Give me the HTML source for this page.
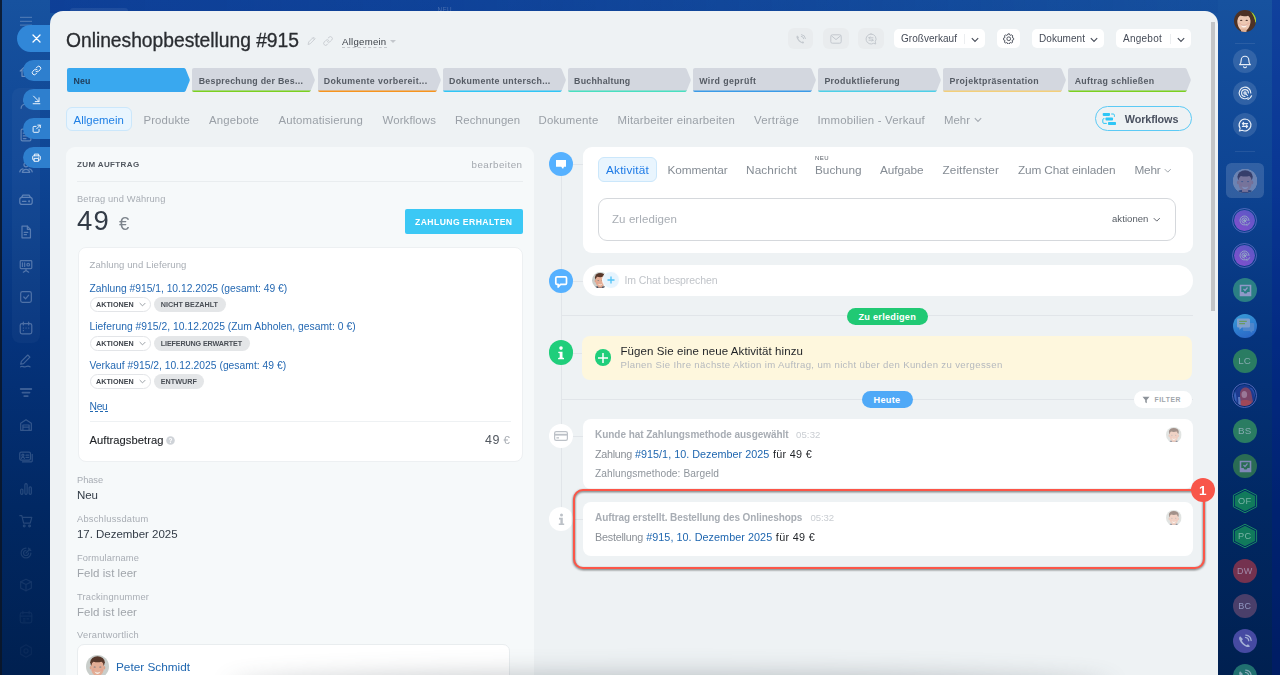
<!DOCTYPE html>
<html lang="de">
<head>
<meta charset="utf-8">
<title>Onlineshopbestellung #915</title>
<style>
*{box-sizing:border-box;margin:0;padding:0}
html,body{width:1280px;height:675px;overflow:hidden}
body{font-family:"Liberation Sans",sans-serif;position:relative;background:linear-gradient(180deg,#17529f 0%,#0e4594 25%,#05337c 50%,#012863 75%,#002050 100%);color:#333}
.abs{position:absolute}
.t{position:absolute;white-space:nowrap;line-height:1}
#edgeL{left:0;top:0;width:2px;height:675px;background:#0a1526;opacity:.85}
#stripR{left:1272px;top:0;width:8px;height:675px;background:rgba(0,20,150,.28)}
#panel{left:50px;top:11px;width:1168px;height:664px;background:#eef2f4;border-radius:13px 13px 0 0;overflow:hidden}
#pw{position:absolute;left:-50px;top:-11px;width:1280px;height:675px}
#scroll{left:1211px;top:22px;width:4px;height:289px;background:#c3c5c7}
.av-peter,.av-peter2{background:radial-gradient(circle at 50% 42%,#e8c3a6 0 32%,transparent 34%),radial-gradient(circle at 50% 22%,#5a3a28 0 38%,transparent 40%),radial-gradient(circle at 50% 105%,#4a5568 0 42%,transparent 44%),#cfd2d6}
.av-sm{background:radial-gradient(circle at 50% 45%,#e6c4aa 0 30%,transparent 33%),radial-gradient(circle at 50% 25%,#8a6a55 0 36%,transparent 39%),radial-gradient(circle at 50% 105%,#b9b3ae 0 40%,transparent 43%),#d8d6d3}
.av-woman{background:radial-gradient(circle at 52% 50%,#e9b99a 0 30%,transparent 33%),radial-gradient(circle at 45% 40%,#4a2a1c 0 52%,transparent 55%),#7a9a3a}
.av-rman{background:radial-gradient(circle at 50% 52%,#8a86a0 0 30%,transparent 33%),radial-gradient(circle at 50% 30%,#4a4660 0 40%,transparent 43%),#5a6a90}
.av-neon{background:radial-gradient(circle at 45% 45%,#7a4a7a 0 25%,transparent 30%),radial-gradient(circle at 50% 80%,#8a3a4a 0 30%,transparent 35%),#2a3a8a}
#root{position:absolute;left:0;top:0;width:1280px;height:675px;overflow:hidden;transform:translateZ(0)}

</style>
</head>
<body>
<div id="root">
<div id="stripR" class="abs"></div>
<div class="abs" style="left:50px;top:0;width:1168px;height:13px;background:linear-gradient(90deg,rgba(0,35,140,.38) 0%,rgba(0,35,140,.32) 35%,rgba(0,35,140,.05) 100%)"></div>
<div class="abs" style="left:70px;top:8px;width:58px;height:6px;background:rgba(255,255,255,.07);border-radius:3px;"></div>
<div class="t" style="left:437.5px;top:7.0px;font-size:6.3px;letter-spacing:0.40px;color:rgba(255,255,255,.22);">NEU</div>
<div class="abs" style="left:11.5px;top:88px;width:28.5px;height:255px;background:rgba(255,255,255,.03);border-radius:8px;"></div>
<svg class="abs" style="left:20px;top:16px;" width="12" height="10" viewBox="0 0 12 10" opacity=".27"><path d="M0 1.300h12M0 5.300h12M0 9.100h12" stroke="#fff" stroke-width="1"/></svg>
<svg class="abs" style="left:18px;top:63px;" width="16" height="16" viewBox="0 0 18 18" fill="none" stroke="#dfe8f5" stroke-width="1.35" stroke-linecap="round" stroke-linejoin="round" opacity="0.42"><path d="M2.500 9L9 3l6.500 6M4.500 8v7h9V8"/></svg>
<svg class="abs" style="left:18px;top:95px;" width="16" height="16" viewBox="0 0 18 18" fill="none" stroke="#dfe8f5" stroke-width="1.35" stroke-linecap="round" stroke-linejoin="round" opacity="0.36"><circle cx="9" cy="6" r="2.600"/><path d="M3.500 15c0-3 2.400-4.600 5.500-4.600s5.500 1.600 5.500 4.600"/></svg>
<svg class="abs" style="left:18px;top:127px;" width="16" height="16" viewBox="0 0 18 18" fill="none" stroke="#dfe8f5" stroke-width="1.35" stroke-linecap="round" stroke-linejoin="round" opacity="0.36"><rect x="3.500" y="2.500" width="11" height="13" rx="1.500"/><path d="M6 7h6M6 10h6M6 13h3"/></svg>
<svg class="abs" style="left:18px;top:158.5px;" width="16" height="16" viewBox="0 0 18 18" fill="none" stroke="#dfe8f5" stroke-width="1.35" stroke-linecap="round" stroke-linejoin="round" opacity="0.36"><circle cx="9" cy="6.500" r="2.300"/><path d="M2 14.500c.3-2 1.800-3 3.500-3.300M16 14.500c-.3-2-1.800-3-3.500-3.300M4.800 15c.4-2.200 2-3.400 4.200-3.400s3.800 1.200 4.200 3.400z"/></svg>
<svg class="abs" style="left:18px;top:191.5px;" width="16" height="16" viewBox="0 0 18 18" fill="none" stroke="#dfe8f5" stroke-width="1.35" stroke-linecap="round" stroke-linejoin="round" opacity="0.36"><rect x="2" y="6" width="14" height="8" rx="2.500"/><path d="M4 6l1.500-2.500h7L14 6M5 10.500h4"/><circle cx="12.500" cy="10.500" r=".5"/></svg>
<svg class="abs" style="left:18px;top:224.3px;" width="16" height="16" viewBox="0 0 18 18" fill="none" stroke="#dfe8f5" stroke-width="1.35" stroke-linecap="round" stroke-linejoin="round" opacity="0.34"><path d="M4.500 2.500h6l3.500 3.500v9.500h-9.500z"/><path d="M10.500 2.500V6H14M7 9.500h4M7 12h2.500"/></svg>
<svg class="abs" style="left:18px;top:257.5px;" width="16" height="16" viewBox="0 0 18 18" fill="none" stroke="#dfe8f5" stroke-width="1.35" stroke-linecap="round" stroke-linejoin="round" opacity="0.32"><rect x="2.500" y="3" width="13" height="9" rx="1"/><path d="M9 12v2M6 16l3-2 3 2M5 5.500v4M7.500 5.500v4"/><circle cx="11.500" cy="7.500" r="1.500"/></svg>
<svg class="abs" style="left:18px;top:289px;" width="16" height="16" viewBox="0 0 18 18" fill="none" stroke="#dfe8f5" stroke-width="1.35" stroke-linecap="round" stroke-linejoin="round" opacity="0.31"><rect x="3" y="3" width="12" height="12" rx="2"/><path d="M6.500 9l2 2 3.500-4"/></svg>
<svg class="abs" style="left:18px;top:320.2px;" width="16" height="16" viewBox="0 0 18 18" fill="none" stroke="#dfe8f5" stroke-width="1.35" stroke-linecap="round" stroke-linejoin="round" opacity="0.3"><rect x="2.500" y="4" width="13" height="11.500" rx="2"/><path d="M6 2.500v3M12 2.500v3M6 9h.1M9 9h.1M12 9h.1M6 12h.1"/></svg>
<svg class="abs" style="left:18px;top:353px;" width="16" height="16" viewBox="0 0 18 18" fill="none" stroke="#dfe8f5" stroke-width="1.35" stroke-linecap="round" stroke-linejoin="round" opacity="0.28"><path d="M3 12.500l.8-3L11 2.300l2.400 2.400L6.200 12z"/><path d="M3 15.500c2-1.500 3.500 1 5.500 0s3-1.500 5 0"/></svg>
<svg class="abs" style="left:18px;top:385px;" width="16" height="16" viewBox="0 0 18 18" fill="none" stroke="#dfe8f5" stroke-width="1.35" stroke-linecap="round" stroke-linejoin="round" opacity="0.25"><path d="M3 4.500h12M5 8.500h8M7 12.500h4" stroke-width="2"/></svg>
<svg class="abs" style="left:18px;top:416.6px;" width="16" height="16" viewBox="0 0 18 18" fill="none" stroke="#dfe8f5" stroke-width="1.35" stroke-linecap="round" stroke-linejoin="round" opacity="0.22"><path d="M3 15V7l6-4 6 4v8z"/><path d="M5.500 15V9h7v6M5.500 11.500h7"/></svg>
<svg class="abs" style="left:18px;top:449px;" width="16" height="16" viewBox="0 0 18 18" fill="none" stroke="#dfe8f5" stroke-width="1.35" stroke-linecap="round" stroke-linejoin="round" opacity="0.2"><rect x="2" y="3.500" width="12" height="9" rx="1.500"/><path d="M16 6v7.500a1 1 0 0 1-1 1H5"/><circle cx="5.500" cy="7" r="1.200"/><path d="M3.800 10.500c.3-1 1-1.400 1.700-1.400s1.400.4 1.700 1.400M9 7h3M9 9.500h3"/></svg>
<svg class="abs" style="left:18px;top:480.5px;" width="16" height="16" viewBox="0 0 18 18" fill="none" stroke="#dfe8f5" stroke-width="1.35" stroke-linecap="round" stroke-linejoin="round" opacity="0.17"><rect x="3" y="9" width="2.500" height="6" rx="1.200"/><rect x="7.750" y="3" width="2.500" height="12" rx="1.200"/><rect x="12.500" y="6.500" width="2.500" height="8.500" rx="1.200"/></svg>
<svg class="abs" style="left:18px;top:512.6px;" width="16" height="16" viewBox="0 0 18 18" fill="none" stroke="#dfe8f5" stroke-width="1.35" stroke-linecap="round" stroke-linejoin="round" opacity="0.17"><path d="M2 3h2.300l2 8.500h7.500L15.500 5H5"/><circle cx="7" cy="14.500" r="1"/><circle cx="13" cy="14.500" r="1"/></svg>
<svg class="abs" style="left:18px;top:544.5px;" width="16" height="16" viewBox="0 0 18 18" fill="none" stroke="#dfe8f5" stroke-width="1.35" stroke-linecap="round" stroke-linejoin="round" opacity="0.12"><path d="M14.500 9a5.500 5.500 0 1 1-5.500-5.500"/><path d="M11.800 9A2.800 2.800 0 1 1 9 6.200M9 9l4.500-4.500M12 3.500l.5 2 2 .5"/></svg>
<svg class="abs" style="left:18px;top:577px;" width="16" height="16" viewBox="0 0 18 18" fill="none" stroke="#dfe8f5" stroke-width="1.35" stroke-linecap="round" stroke-linejoin="round" opacity="0.085"><path d="M9 2.500l6 3v7l-6 3-6-3v-7z"/><path d="M3 5.500l6 3 6-3M9 8.500v7"/></svg>
<svg class="abs" style="left:18px;top:608.7px;" width="16" height="16" viewBox="0 0 18 18" fill="none" stroke="#dfe8f5" stroke-width="1.35" stroke-linecap="round" stroke-linejoin="round" opacity="0.055"><rect x="2.500" y="4" width="13" height="11.500" rx="2"/><path d="M5.500 2.500v3M12.500 2.500v3M2.500 8h13M6 11h2M10 11h2M6 13.500h2"/></svg>
<svg class="abs" style="left:18px;top:643px;" width="16" height="16" viewBox="0 0 18 18" fill="none" stroke="#dfe8f5" stroke-width="1.35" stroke-linecap="round" stroke-linejoin="round" opacity="0.045"><path d="M9 2l6 3.500v7L9 16l-6-3.500v-7z"/><circle cx="9" cy="9" r="2.300"/></svg>
<svg class="abs" style="left:1233.8px;top:10.2px;" width="22" height="22" viewBox="0 0 22 22" fill="none"><defs><clipPath id="avw"><circle cx="11" cy="11" r="11"/></clipPath></defs><g clip-path="url(#avw)"><rect width="22" height="22" fill="#4d3226"/><path d="M15.500 0h6.500v14c-1-5-2.800-10-6.500-14z" fill="#86b52c"/><path d="M17.800 2.800c1.800 2.400 3.200 5.700 3.500 9.500l.7-.5V2z" fill="#a9d13e"/><path d="M3.300 11c0-5 2.700-7.800 6.500-7.800s6.700 2.800 6.700 7.800c0 5.200-3 10-6.700 10S3.300 16.200 3.300 11z" fill="#ecc8b3"/><rect x="7" y="18.500" width="5.500" height="4" fill="#dfb39a"/><path d="M2.600 12.500C1.300 6 4.500 1.800 10 1.800c5 0 8 3.200 7.400 9.700-.8-2.800-1.800-4.600-3.300-5.800C11.600 6.500 8.400 6.300 6.200 5.600 4.200 7 3.200 9.500 2.600 12.500z" fill="#4d3226"/><ellipse cx="7.200" cy="10.400" rx="1.200" ry=".65" fill="#5a4138"/><ellipse cx="12.700" cy="10.400" rx="1.200" ry=".65" fill="#5a4138"/><path d="M7 15c1.900 1 4 1 5.900 0-.5 1.800-1.700 2.500-2.950 2.500S7.500 16.800 7 15z" fill="#fbf3ee"/><path d="M6.800 14.800c2 .6 4.300.6 6.300 0" fill="none" stroke="#c98b80" stroke-width=".5"/><ellipse cx="5.500" cy="13.500" rx="1.500" ry="1.100" fill="#e7a898" opacity=".5"/><ellipse cx="14.300" cy="13.500" rx="1.500" ry="1.100" fill="#e7a898" opacity=".5"/></g></svg>
<div class="abs" style="left:1235px;top:43px;width:20px;height:1px;background:rgba(255,255,255,.09);border-radius:0px;"></div>
<div class="abs" style="left:1232.7px;top:49px;width:24px;height:24px;border-radius:50%;background:rgba(255,255,255,.13);"></div>
<div class="abs" style="left:1232.7px;top:81px;width:24px;height:24px;border-radius:50%;background:rgba(255,255,255,.13);"></div>
<div class="abs" style="left:1232.7px;top:113px;width:24px;height:24px;border-radius:50%;background:rgba(255,255,255,.13);"></div>
<svg class="abs" style="left:1237px;top:53px;" width="16" height="16" viewBox="0 0 16 16" fill="none" stroke="#e9eff8" stroke-width="1.150" stroke-linecap="round" stroke-linejoin="round"><path d="M2.600 11.600c1.300-1.100 1.600-2.400 1.600-4.600a3.800 3.800 0 0 1 7.600 0c0 2.200.3 3.500 1.600 4.600zM6.600 13.800a1.500 1.500 0 0 0 2.800 0"/></svg>
<svg class="abs" style="left:1237px;top:85px;" width="16" height="16" viewBox="0 0 16 16" fill="none" stroke="#e9eff8" stroke-width="1.150" stroke-linecap="round" stroke-linejoin="round"><path d="M13.800 8a5.800 5.800 0 1 0-2.600 4.800"/><path d="M11.400 8A3.400 3.400 0 1 0 8 11.400"/><path d="M14.600 10.800a7 7 0 0 1-3.600 3.700"/><circle cx="8" cy="8" r="1.100"/><path d="M8.800 8.800l1.600 1.600"/></svg>
<svg class="abs" style="left:1237px;top:117px;" width="16" height="16" viewBox="0 0 16 16" fill="none" stroke="#e9eff8" stroke-width="1.150" stroke-linecap="round" stroke-linejoin="round"><path d="M8 2a6 6 0 1 1-2.900 11.300l-2.700.7.700-2.700A6 6 0 0 1 8 2z"/><path d="M5.400 6.600h5.200M5.400 6.600l1.200-1.200M5.400 6.600l1.200 1.200M10.600 9.400H5.400M10.600 9.400l-1.200-1.200M10.600 9.400l-1.200 1.200"/></svg>
<div class="abs" style="left:1235px;top:151px;width:20px;height:1px;background:rgba(255,255,255,.09);border-radius:0px;"></div>
<div class="abs" style="left:1226px;top:163px;width:38px;height:35px;background:rgba(255,255,255,.15);border-radius:5.5px;"></div>
<svg class="abs" style="left:1232.8px;top:168.7px;" width="24.2" height="24.2" viewBox="0 0 23 23" fill="none"><defs><clipPath id="avp1"><circle cx="11.500" cy="11.500" r="11.500"/></clipPath></defs><g clip-path="url(#avp1)" opacity="1"><rect width="23" height="23" fill="#c9cecb"/><path d="M2.500 24c.5-2.500 2.500-3.600 5.500-4h7c3 .4 5 1.500 5.500 4z" fill="#3b4356"/><rect x="8.600" y="17" width="5.800" height="5" fill="#d79f88"/><ellipse cx="11.500" cy="7.300" rx="7.300" ry="6" fill="#56372a"/><ellipse cx="4.800" cy="12.800" rx="1.100" ry="1.800" fill="#dba18a"/><ellipse cx="18.200" cy="12.800" rx="1.100" ry="1.800" fill="#dba18a"/><path d="M5.300 9.500c0-3 2.500-4.600 6.200-4.600s6.200 1.600 6.200 4.600v4.500c0 4-2.800 7-6.200 7s-6.200-3-6.200-7z" fill="#e3ad95"/><path d="M5 10.500c-.3-3.500 1.500-6.300 6.500-6.300s6.800 2.800 6.500 6.300c-.8-2-1.500-3.300-2.600-3.800-2.400.7-5.400.7-7.800 0-1.100.5-1.800 1.800-2.600 3.800z" fill="#56372a"/><ellipse cx="8.700" cy="12" rx="1.100" ry=".6" fill="#6c7480"/><ellipse cx="14.300" cy="12" rx="1.100" ry=".6" fill="#6c7480"/><path d="M8.600 16.600c1.800 1.300 4 1.300 5.800 0-.5 1.700-1.700 2.400-2.900 2.400s-2.400-.7-2.900-2.400z" fill="#f4ece6"/><ellipse cx="7.300" cy="15" rx="1.600" ry="1.200" fill="#e79f8d" opacity=".6"/><ellipse cx="15.700" cy="15" rx="1.600" ry="1.200" fill="#e79f8d" opacity=".6"/><rect width="23" height="23" fill="rgba(30,70,160,.55)"/></g></svg>
<div class="abs" style="left:1232.2px;top:207.8px;width:25px;height:25px;border-radius:50%;background:none;border:1px solid rgba(135,135,225,.55);"></div>
<div class="abs" style="left:1234.3px;top:209.9px;width:20.8px;height:20.8px;border-radius:50%;background:linear-gradient(35deg,#7f50cc 10%,#5c58c6 90%);"></div>
<svg class="abs" style="left:1238.2px;top:213.8px;" width="13" height="13" viewBox="0 0 13 13" fill="none" stroke="#93a6c6" stroke-width="1" stroke-linecap="round"><path d="M11 6.500a4.500 4.500 0 1 0-2 3.750"/><path d="M9.100 6.500A2.600 2.600 0 1 0 6.500 9.100"/><path d="M11.600 8.700a5.400 5.400 0 0 1-2.700 2.800"/><circle cx="6.500" cy="6.500" r=".9" fill="#93a6c6"/><path d="M7 7l1.300 1.300"/></svg>
<div class="abs" style="left:1232.2px;top:242.7px;width:25px;height:25px;border-radius:50%;background:none;border:1px solid rgba(135,135,225,.55);"></div>
<div class="abs" style="left:1234.3px;top:244.8px;width:20.8px;height:20.8px;border-radius:50%;background:linear-gradient(35deg,#7f50cc 10%,#5c58c6 90%);"></div>
<svg class="abs" style="left:1238.2px;top:248.7px;" width="13" height="13" viewBox="0 0 13 13" fill="none" stroke="#93a6c6" stroke-width="1" stroke-linecap="round"><path d="M11 6.500a4.500 4.500 0 1 0-2 3.750"/><path d="M9.100 6.500A2.600 2.600 0 1 0 6.500 9.100"/><path d="M11.600 8.700a5.400 5.400 0 0 1-2.700 2.800"/><circle cx="6.500" cy="6.500" r=".9" fill="#93a6c6"/><path d="M7 7l1.300 1.300"/></svg>
<div class="abs" style="left:1232.7px;top:278px;width:24px;height:24px;border-radius:50%;background:#2b7f84;"></div>
<svg class="abs" style="left:1238.5px;top:283.5px;" width="13" height="13" viewBox="0 0 13 13" fill="none"><path d="M1.500 1.500h10v10h-10z" fill="none" stroke="#8f99c8" stroke-width="1.600"/><path d="M1.500 8h3l1 1.500h2l1-1.500h3v3.500h-10z" fill="#8f99c8"/><path d="M4.500 5l1.500 1.500 2.500-3" fill="none" stroke="#8f99c8" stroke-width="1.200"/></svg>
<div class="abs" style="left:1232.7px;top:313.6px;width:24px;height:24px;border-radius:50%;background:linear-gradient(160deg,#3a9ed6 0%,#2f7fd0 50%,#2a62c4 100%);"></div>
<svg class="abs" style="left:1235.7px;top:316.5px;" width="19" height="17" viewBox="0 0 19 17" fill="none"><path d="M8 6h9a1.200 1.200 0 0 1 1.200 1.200v5.600a1.200 1.200 0 0 1-1.200 1.200h-.8v2l-2.400-2H8a1.200 1.200 0 0 1-1.200-1.200V7.200A1.200 1.200 0 0 1 8 6z" fill="#4f86cc"/><path d="M2.200 1.500h10.600a1.200 1.200 0 0 1 1.200 1.200v6.600a1.200 1.200 0 0 1-1.200 1.200H6l-2.600 2.200v-2.200H2.200A1.200 1.200 0 0 1 1 9.300V2.700a1.200 1.200 0 0 1 1.200-1.200z" fill="#7f9fcc"/><path d="M3.200 4.300h7.600M3.200 6.700h5.800" stroke="#6a9a62" stroke-width="1.300"/></svg>
<div class="abs" style="left:1232.7px;top:348.7px;width:24px;height:24px;border-radius:50%;background:#2a7c62;"></div>
<div class="t" style="left:1224.700px;width:40px;text-align:center;top:356.1px;font-size:9.8px;color:#86aab0;letter-spacing:.2px">LC</div>
<div class="abs" style="left:1232.4px;top:383.2px;width:24.6px;height:24.6px;border-radius:50%;background:none;border:1px solid rgba(135,135,225,.6);"></div>
<svg class="abs" style="left:1234.2px;top:385px;" width="21" height="21" viewBox="0 0 21 21" fill="none"><defs><clipPath id="avn"><circle cx="10.500" cy="10.500" r="10.500"/></clipPath></defs><g clip-path="url(#avn)"><rect width="21" height="21" fill="#1c3a90"/><path d="M0 5c2 2 3 8 2.500 16H0z" fill="#3a62b8"/><path d="M15 3c3 1 5 5 6 10V3z" fill="#2a50a8"/><path d="M6 9c0-4 2.500-6.500 5.500-6.500S17 5 17.500 9c.5 4 1.500 8 3 12H5c1-4 1-8 1-12z" fill="#7a4468"/><ellipse cx="10.300" cy="9.500" rx="2.800" ry="3.600" fill="#9a7898"/><path d="M6.500 16c2-1.500 7-1.500 10 0l2 5h-13z" fill="#a04858"/><path d="M4 12c.5 3 .5 6 0 9h2.500c.3-3 0-6-.5-9z" fill="#5a78c0"/></g></svg>
<div class="abs" style="left:1232.7px;top:419px;width:24px;height:24px;border-radius:50%;background:#2a7c62;"></div>
<div class="t" style="left:1224.700px;width:40px;text-align:center;top:426.4px;font-size:9.8px;color:#86aab0;letter-spacing:.2px">BS</div>
<div class="abs" style="left:1232.7px;top:454px;width:24px;height:24px;border-radius:50%;background:#2a6c54;"></div>
<svg class="abs" style="left:1238.5px;top:459.5px;" width="13" height="13" viewBox="0 0 13 13" fill="none"><path d="M1.500 1.500h10v10h-10z" fill="none" stroke="#8088b8" stroke-width="1.600"/><path d="M1.500 8h3l1 1.500h2l1-1.500h3v3.500h-10z" fill="#8088b8"/><path d="M4.500 5l1.500 1.500 2.500-3" fill="none" stroke="#8088b8" stroke-width="1.200"/></svg>
<svg class="abs" style="left:1231.7px;top:488px;" width="26" height="26" viewBox="0 0 26 26" fill="none"><path d="M13 1.200L24.600 7.200V18.800L13 24.800 1.400 18.800V7.200z" fill="none" stroke="#1a8a64" stroke-width="1" stroke-linejoin="round"/><path d="M13 3.800L22.200 8.600V17.400L13 22.200 3.800 17.400V8.600z" fill="#117a5c" stroke="#117a5c" stroke-width="2" stroke-linejoin="round"/></svg>
<div class="t" style="left:1224.700px;width:40px;text-align:center;top:496.7px;font-size:9.2px;color:#7ab4a6;letter-spacing:.2px">OF</div>
<svg class="abs" style="left:1231.7px;top:523px;" width="26" height="26" viewBox="0 0 26 26" fill="none"><path d="M13 1.200L24.600 7.200V18.800L13 24.800 1.400 18.800V7.200z" fill="none" stroke="#1a8a64" stroke-width="1" stroke-linejoin="round"/><path d="M13 3.800L22.200 8.600V17.400L13 22.200 3.800 17.400V8.600z" fill="#117a5c" stroke="#117a5c" stroke-width="2" stroke-linejoin="round"/></svg>
<div class="t" style="left:1224.700px;width:40px;text-align:center;top:531.7px;font-size:9.2px;color:#7ab4a6;letter-spacing:.2px">PC</div>
<div class="abs" style="left:1232.7px;top:559px;width:24px;height:24px;border-radius:50%;background:#74324f;"></div>
<div class="t" style="left:1224.700px;width:40px;text-align:center;top:566.8px;font-size:9px;color:#a08aa8;letter-spacing:.2px">DW</div>
<div class="abs" style="left:1232.7px;top:594px;width:24px;height:24px;border-radius:50%;background:#4a3f6a;"></div>
<div class="t" style="left:1224.700px;width:40px;text-align:center;top:601.8px;font-size:9px;color:#8f96c0;letter-spacing:.2px">BC</div>
<div class="abs" style="left:1232.7px;top:629px;width:24px;height:24px;border-radius:50%;background:#464aa2;"></div>
<svg class="abs" style="left:1237.2px;top:633.5px;" width="15" height="15" viewBox="0 0 12 12" fill="none"><path d="M2.500 1.800c-.9.700-1 1.800-.5 3 1.100 2.500 2.900 4.300 5.400 5.400 1.200.5 2.300.4 3-.5L8.800 8.100l-1.400.8C6 8.200 4.600 6.800 3.900 5.400l.8-1.400z" fill="#a4b0d6"/><path d="M6.800 2.800a2.800 2.800 0 0 1 2.600 2.600M7 .9a4.800 4.800 0 0 1 4.300 4.300" fill="none" stroke="#a4b0d6" stroke-width="1" stroke-linecap="round"/></svg>
<div class="abs" style="left:1232.7px;top:664px;width:24px;height:24px;border-radius:50%;background:#207070;"></div>
<svg class="abs" style="left:1237.2px;top:668.5px;" width="15" height="15" viewBox="0 0 12 12" fill="none"><path d="M2.500 1.800c-.9.700-1 1.800-.5 3 1.100 2.500 2.900 4.300 5.400 5.400 1.200.5 2.300.4 3-.5L8.800 8.100l-1.400.8C6 8.200 4.600 6.800 3.900 5.400l.8-1.400z" fill="#86aab8"/><path d="M6.800 2.800a2.800 2.800 0 0 1 2.600 2.600M7 .9a4.800 4.800 0 0 1 4.300 4.300" fill="none" stroke="#86aab8" stroke-width="1" stroke-linecap="round"/></svg>
<div class="abs" style="left:17px;top:25px;width:35px;height:27px;background:#3187d8;border-radius:13.5px 0 0 13.5px;"></div>
<svg class="abs" style="left:31.5px;top:34px;" width="9" height="9" viewBox="0 0 9 9" fill="none"><path d="M1 1l7 7M8 1l-7 7" stroke="#fff" stroke-width="1.300" stroke-linecap="round"/></svg>
<div class="abs" style="left:23px;top:59.5px;width:29px;height:21px;background:#2e7fce;border-radius:10.5px 0 0 10.5px;"></div>
<svg class="abs" style="left:30.5px;top:64.5px;" width="11" height="11" viewBox="0 0 13 13" fill="none" stroke="#f2f7fd" stroke-width="1.150" stroke-linecap="round" stroke-linejoin="round"><path d="M5.600 7.400a2.400 2.400 0 0 0 3.400 0l1.800-1.800a2.400 2.400 0 0 0-3.400-3.400l-.9.900"/><path d="M7.400 5.600a2.400 2.400 0 0 0-3.400 0L2.200 7.400a2.400 2.400 0 0 0 3.400 3.400l.9-.9"/></svg>
<div class="abs" style="left:23px;top:88.5px;width:29px;height:21px;background:#2e7fce;border-radius:10.5px 0 0 10.5px;"></div>
<svg class="abs" style="left:30.5px;top:93.5px;" width="11" height="11" viewBox="0 0 13 13" fill="none" stroke="#f2f7fd" stroke-width="1.150" stroke-linecap="round" stroke-linejoin="round"><path d="M3 2.500l6.500 6.500M9.500 4.500V9H5M2.500 11.500h8"/></svg>
<div class="abs" style="left:23px;top:117.5px;width:29px;height:21px;background:#2e7fce;border-radius:10.5px 0 0 10.5px;"></div>
<svg class="abs" style="left:30.5px;top:122.5px;" width="11" height="11" viewBox="0 0 13 13" fill="none" stroke="#f2f7fd" stroke-width="1.150" stroke-linecap="round" stroke-linejoin="round"><path d="M9.500 7.500v2.500a1 1 0 0 1-1 1h-5a1 1 0 0 1-1-1V5a1 1 0 0 1 1-1H6M8 2.500h3v3M11 2.500L6.500 7"/></svg>
<div class="abs" style="left:23px;top:146.5px;width:29px;height:21px;background:#2e7fce;border-radius:10.5px 0 0 10.5px;"></div>
<svg class="abs" style="left:30.5px;top:151.5px;" width="11" height="11" viewBox="0 0 13 13" fill="none" stroke="#f2f7fd" stroke-width="1.150" stroke-linecap="round" stroke-linejoin="round"><path d="M4 4.500V2.500h5v2M4 9.500H3a1 1 0 0 1-1-1V5.500a1 1 0 0 1 1-1h7a1 1 0 0 1 1 1v3a1 1 0 0 1-1 1H9M4 7.500h5v3.500H4zM9 6.200h.1"/></svg>
<div id="panel" class="abs">
<div id="pw">
<div class="t" style="left:66.0px;top:31.0px;font-size:19.3px;letter-spacing:-0.03px;color:#2a2d31;-webkit-text-stroke:.3px #2a2d31;">Onlineshopbestellung #915</div>
<svg class="abs" style="left:307.2px;top:36.3px;" width="9.3" height="9.3" viewBox="0 0 12 12" fill="none" stroke="#c9cdd2" stroke-width="1.200" stroke-linecap="round" stroke-linejoin="round"><path d="M1.5 10.500l.7-2.800 6.200-6.200 2.100 2.100-6.200 6.200z"/><path d="M7.300 2.600l2.100 2.100"/></svg>
<svg class="abs" style="left:322.5px;top:36px;" width="10" height="10" viewBox="0 0 12 12" fill="none" stroke="#c9cdd2" stroke-width="1.200" stroke-linecap="round" stroke-linejoin="round"><path d="M5.200 6.800a2.300 2.300 0 0 0 3.300 0l2-2a2.300 2.300 0 0 0-3.300-3.300l-1 1"/><path d="M6.800 5.200a2.300 2.300 0 0 0-3.300 0l-2 2a2.300 2.300 0 0 0 3.300 3.300l1-1"/></svg>
<div class="t" style="left:342.0px;top:37.0px;font-size:9.6px;letter-spacing:0.26px;color:#3d4249;">Allgemein</div>
<div class="abs" style="left:342px;top:46.5px;width:45px;height:1px;background:none;border-radius:0px;border-bottom:1px dashed #c3c7cc;height:1px"></div>
<div class="abs" style="left:390.200px;top:40.200px;border:3px solid transparent;border-top:3.200px solid #c3c7cc;border-bottom:0"></div>
<div class="abs" style="left:788px;top:28.2px;width:25px;height:20.8px;background:#e9ecee;border-radius:6px;"></div><div class="abs" style="left:823px;top:28.2px;width:26px;height:20.8px;background:#e9ecee;border-radius:6px;"></div><div class="abs" style="left:858px;top:28.2px;width:26px;height:20.8px;background:#e9ecee;border-radius:6px;"></div>
<svg class="abs" style="left:795px;top:33.5px;" width="11" height="11" viewBox="0 0 11 11" fill="none" stroke="#c3c8ce" stroke-width="1" stroke-linecap="round"><path d="M2.2 1.500c-.8.600-.9 1.600-.4 2.700 1 2.200 2.600 3.900 4.800 4.900 1 .500 2 .400 2.600-.4L8 7.300l-1.300.7C5.400 7.400 4 6 3.300 4.600L4 3.300z" fill="#c3c8ce" stroke="none"/><path d="M6.300 2.300a2.600 2.600 0 0 1 2.400 2.400M6.500.6a4.400 4.400 0 0 1 4 4"/></svg>
<svg class="abs" style="left:830px;top:34px;" width="12" height="10" viewBox="0 0 12 10" fill="none" stroke="#c3c8ce" stroke-width="1" stroke-linejoin="round"><rect x=".8" y=".8" width="10.4" height="8.4" rx="1.5"/><path d="M1.200 1.600L6 5.600l4.800-4"/></svg>
<svg class="abs" style="left:864.5px;top:32.5px;" width="12" height="12" viewBox="0 0 12 12" fill="none" stroke="#c3c8ce" stroke-width="1" stroke-linecap="round" stroke-linejoin="round"><path d="M6 1a5 5 0 1 0 2.600 9.300l2.200.700-.6-2.200A5 5 0 0 0 6 1z"/><path d="M4 4.800h4M4 4.800l1-1M4 4.800l1 1M8 7.200H4M8 7.200l-1 1M8 7.200l-1-1"/></svg>
<div class="abs" style="left:894px;top:29.2px;width:91px;height:19px;background:#fff;border-radius:5px;"></div><div class="abs" style="left:997px;top:29.2px;width:23px;height:19px;background:#fff;border-radius:5px;"></div><div class="abs" style="left:1032px;top:29.2px;width:72px;height:19px;background:#fff;border-radius:5px;"></div><div class="abs" style="left:1116px;top:29.2px;width:75px;height:19px;background:#fff;border-radius:5px;"></div>
<div class="t" style="left:901.0px;top:34.0px;font-size:10px;letter-spacing:0.04px;color:#464c58;">Großverkauf</div>
<div class="abs" style="left:964px;top:34px;width:1px;height:10px;background:#eceef0;border-radius:0px;"></div>
<svg class="abs" style="left:971px;top:36.5px;" width="8" height="6" viewBox="0 0 8 6" fill="none" stroke="#464c58" stroke-width="1.1"><path d="M.8 1.2l3.200 3.200 3.200-3.200"/></svg>
<svg class="abs" style="left:1003px;top:32.9px;" width="11.5" height="11.5" viewBox="0 0 13 13" fill="none" stroke="#464c58" stroke-width="1.050"><circle cx="6.500" cy="6.500" r="2.100"/><path d="M5.600 1h1.800l.35 1.300 1 .42 1.170-.67 1.270 1.270-.67 1.170.42 1L12 5.840v1.800l-1.300.35-.42 1 .67 1.170-1.270 1.270-1.170-.67-1 .42L7.160 12.500h-1.800L5 11.200l-1-.42-1.170.67-1.270-1.270.67-1.170-.42-1L.5 7.660v-1.800l1.300-.35.42-1-.67-1.170 1.270-1.270 1.170.67 1-.42z" stroke-linejoin="round"/></svg>
<div class="t" style="left:1039.0px;top:34.0px;font-size:10px;letter-spacing:0.05px;color:#464c58;">Dokument</div>
<svg class="abs" style="left:1090px;top:36.5px;" width="8" height="6" viewBox="0 0 8 6" fill="none" stroke="#464c58" stroke-width="1.1"><path d="M.8 1.2l3.200 3.200 3.200-3.200"/></svg>
<div class="t" style="left:1123.0px;top:34.0px;font-size:10px;letter-spacing:0.25px;color:#464c58;">Angebot</div>
<div class="abs" style="left:1170px;top:34px;width:1px;height:10px;background:#eceef0;border-radius:0px;"></div>
<svg class="abs" style="left:1177px;top:36.5px;" width="8" height="6" viewBox="0 0 8 6" fill="none" stroke="#464c58" stroke-width="1.1"><path d="M.8 1.2l3.200 3.200 3.200-3.200"/></svg>
<svg class="abs" style="left:67.2px;top:68px;" width="125" height="24" viewBox="0 0 125 24" fill="none"><path d="M2 0H116.500Q118 0 118.700 1.200L122.600 11Q123 12 122.600 13L118.700 22.800Q118 24 116.500 24H2Q0 24 0 22V2Q0 0 2 0Z" fill="#39a8ef"/></svg>
<div class="t" style="left:73.5px;top:77.0px;font-size:8.8px;font-weight:700;letter-spacing:0.12px;color:#1f3a57;">Neu</div>
<svg class="abs" style="left:192.35px;top:68px;" width="125" height="24" viewBox="0 0 125 24" fill="none"><defs><clipPath id="sc1"><path d="M2 0H116.500Q118 0 118.700 1.200L122.600 11Q123 12 122.600 13L118.700 22.800Q118 24 116.500 24H2Q0 24 0 22V2Q0 0 2 0Z"/></clipPath></defs><g clip-path="url(#sc1)"><rect width="125" height="24" fill="#d3d7df"/><rect y="22.500" width="119.500" height="1.500" fill="#7bd11f"/></g></svg>
<div class="t" style="left:198.7px;top:77.0px;font-size:8.8px;font-weight:700;letter-spacing:0.28px;color:#555b64;">Besprechung der Bes...</div>
<svg class="abs" style="left:317.5px;top:68px;" width="125" height="24" viewBox="0 0 125 24" fill="none"><defs><clipPath id="sc2"><path d="M2 0H116.500Q118 0 118.700 1.200L122.600 11Q123 12 122.600 13L118.700 22.800Q118 24 116.500 24H2Q0 24 0 22V2Q0 0 2 0Z"/></clipPath></defs><g clip-path="url(#sc2)"><rect width="125" height="24" fill="#d3d7df"/><rect y="22.500" width="119.500" height="1.500" fill="#f7941d"/></g></svg>
<div class="t" style="left:323.8px;top:77.0px;font-size:8.8px;font-weight:700;letter-spacing:0.38px;color:#555b64;">Dokumente vorbereit...</div>
<svg class="abs" style="left:442.65px;top:68px;" width="125" height="24" viewBox="0 0 125 24" fill="none"><defs><clipPath id="sc3"><path d="M2 0H116.500Q118 0 118.700 1.200L122.600 11Q123 12 122.600 13L118.700 22.800Q118 24 116.500 24H2Q0 24 0 22V2Q0 0 2 0Z"/></clipPath></defs><g clip-path="url(#sc3)"><rect width="125" height="24" fill="#d3d7df"/><rect y="22.500" width="119.500" height="1.500" fill="#2fc6f6"/></g></svg>
<div class="t" style="left:449.0px;top:77.0px;font-size:8.8px;font-weight:700;letter-spacing:0.32px;color:#555b64;">Dokumente untersch...</div>
<svg class="abs" style="left:567.8px;top:68px;" width="125" height="24" viewBox="0 0 125 24" fill="none"><defs><clipPath id="sc4"><path d="M2 0H116.500Q118 0 118.700 1.200L122.600 11Q123 12 122.600 13L118.700 22.800Q118 24 116.500 24H2Q0 24 0 22V2Q0 0 2 0Z"/></clipPath></defs><g clip-path="url(#sc4)"><rect width="125" height="24" fill="#d3d7df"/><rect y="22.500" width="119.500" height="1.500" fill="#48e0c0"/></g></svg>
<div class="t" style="left:574.1px;top:77.0px;font-size:8.8px;font-weight:700;letter-spacing:0.24px;color:#555b64;">Buchhaltung</div>
<svg class="abs" style="left:692.95px;top:68px;" width="125" height="24" viewBox="0 0 125 24" fill="none"><defs><clipPath id="sc5"><path d="M2 0H116.500Q118 0 118.700 1.200L122.600 11Q123 12 122.600 13L118.700 22.800Q118 24 116.500 24H2Q0 24 0 22V2Q0 0 2 0Z"/></clipPath></defs><g clip-path="url(#sc5)"><rect width="125" height="24" fill="#d3d7df"/><rect y="22.500" width="119.500" height="1.500" fill="#3a9be8"/></g></svg>
<div class="t" style="left:699.2px;top:77.0px;font-size:8.8px;font-weight:700;letter-spacing:0.42px;color:#555b64;">Wird geprüft</div>
<svg class="abs" style="left:818.1px;top:68px;" width="125" height="24" viewBox="0 0 125 24" fill="none"><defs><clipPath id="sc6"><path d="M2 0H116.500Q118 0 118.700 1.200L122.600 11Q123 12 122.600 13L118.700 22.800Q118 24 116.500 24H2Q0 24 0 22V2Q0 0 2 0Z"/></clipPath></defs><g clip-path="url(#sc6)"><rect width="125" height="24" fill="#d3d7df"/><rect y="22.500" width="119.500" height="1.500" fill="#4dd0e8"/></g></svg>
<div class="t" style="left:824.4px;top:77.0px;font-size:8.8px;font-weight:700;letter-spacing:0.33px;color:#555b64;">Produktlieferung</div>
<svg class="abs" style="left:943.25px;top:68px;" width="125" height="24" viewBox="0 0 125 24" fill="none"><defs><clipPath id="sc7"><path d="M2 0H116.500Q118 0 118.700 1.200L122.600 11Q123 12 122.600 13L118.700 22.800Q118 24 116.500 24H2Q0 24 0 22V2Q0 0 2 0Z"/></clipPath></defs><g clip-path="url(#sc7)"><rect width="125" height="24" fill="#d3d7df"/><rect y="22.500" width="119.500" height="1.500" fill="#f3cf7a"/></g></svg>
<div class="t" style="left:949.6px;top:77.0px;font-size:8.8px;font-weight:700;letter-spacing:0.36px;color:#555b64;">Projektpräsentation</div>
<svg class="abs" style="left:1068.4px;top:68px;" width="125" height="24" viewBox="0 0 125 24" fill="none"><defs><clipPath id="sc8"><path d="M2 0H116.500Q118 0 118.700 1.200L122.600 11Q123 12 122.600 13L118.700 22.800Q118 24 116.500 24H2Q0 24 0 22V2Q0 0 2 0Z"/></clipPath></defs><g clip-path="url(#sc8)"><rect width="125" height="24" fill="#d3d7df"/><rect y="22.500" width="119.500" height="1.500" fill="#7bd11f"/></g></svg>
<div class="t" style="left:1074.7px;top:77.0px;font-size:8.8px;font-weight:700;letter-spacing:0.32px;color:#555b64;">Auftrag schließen</div>
<div class="abs" style="left:66px;top:107px;width:66px;height:24px;background:#e9f5fe;border-radius:6px;border:1px solid #cbe7fb"></div>
<div class="t" style="left:73.5px;top:115.0px;font-size:11.4px;letter-spacing:0.05px;color:#1f7fe5;">Allgemein</div>
<div class="t" style="left:143.5px;top:115.0px;font-size:11.4px;letter-spacing:0.11px;color:#9aa0a7;">Produkte</div>
<div class="t" style="left:209.0px;top:115.0px;font-size:11.4px;letter-spacing:0.15px;color:#9aa0a7;">Angebote</div>
<div class="t" style="left:278.5px;top:115.0px;font-size:11.4px;letter-spacing:0.15px;color:#9aa0a7;">Automatisierung</div>
<div class="t" style="left:382.5px;top:115.0px;font-size:11.4px;letter-spacing:0.13px;color:#9aa0a7;">Workflows</div>
<div class="t" style="left:455.0px;top:115.0px;font-size:11.4px;letter-spacing:0.04px;color:#9aa0a7;">Rechnungen</div>
<div class="t" style="left:538.5px;top:115.0px;font-size:11.4px;letter-spacing:0.19px;color:#9aa0a7;">Dokumente</div>
<div class="t" style="left:617.5px;top:115.0px;font-size:11.4px;letter-spacing:0.18px;color:#9aa0a7;">Mitarbeiter einarbeiten</div>
<div class="t" style="left:754.0px;top:115.0px;font-size:11.4px;letter-spacing:0.24px;color:#9aa0a7;">Verträge</div>
<div class="t" style="left:817.5px;top:115.0px;font-size:11.4px;letter-spacing:0.18px;color:#9aa0a7;">Immobilien - Verkauf</div>
<div class="t" style="left:944.0px;top:115.0px;font-size:11.4px;letter-spacing:0.01px;color:#9aa0a7;">Mehr</div>
<svg class="abs" style="left:974px;top:117px;" width="8" height="6" viewBox="0 0 8 6" fill="none" stroke="#a5abb2" stroke-width="1.1"><path d="M.8 1.2l3.200 3.200 3.200-3.200"/></svg>
<div class="abs" style="left:1095px;top:106.4px;width:97.3px;height:24.6px;background:transparent;border-radius:12.5px;border:1px solid #5ccaf5"></div>
<svg class="abs" style="left:1102px;top:112px;" width="15" height="14" viewBox="0 0 15 14" fill="none"><rect x=".7" y=".9" width="7.300" height="3" rx=".8" fill="#2fc6f6"/><rect x="3.500" y="5.500" width="7.500" height="3.100" rx=".8" fill="#2fc6f6"/><rect x="6" y="9.900" width="8" height="3.100" rx=".8" fill="#2fc6f6"/><path d="M9.200 2h2a1.200 1.200 0 0 1 1.200 1.200v1.600M2.400 6.600h-.4a1.200 1.200 0 0 0-1.200 1.200v2.400a1.200 1.200 0 0 0 1.200 1.200h2.800" fill="none" stroke="#2fc6f6" stroke-width="1"/></svg>
<div class="t" style="left:1124.8px;top:114.0px;font-size:10.8px;font-weight:700;letter-spacing:-0.10px;color:#4a5160;">Workflows</div>
<div class="abs" style="left:65.5px;top:147px;width:468.5px;height:553px;background:#f6f9fa;border-radius:9px;"></div>
<div class="t" style="left:77.0px;top:161.0px;font-size:8px;font-weight:700;letter-spacing:0.38px;color:#525860;">ZUM AUFTRAG</div>
<div class="t" style="left:471.5px;top:160.0px;font-size:9.8px;letter-spacing:0.47px;color:#a3a8ae;">bearbeiten</div>
<div class="abs" style="left:77px;top:181px;width:445.5px;height:1px;background:#e9edef;border-radius:0px;"></div>
<div class="t" style="left:77.0px;top:195.0px;font-size:9.3px;letter-spacing:0.15px;color:#a8adb4;">Betrag und Währung</div>
<div class="t" style="left:77.0px;top:207.0px;font-size:27.5px;letter-spacing:1.20px;color:#333c47;">49</div>
<div class="t" style="left:119.0px;top:215.0px;font-size:18.5px;letter-spacing:0.70px;color:#7d848c;">€</div>
<div class="abs" style="left:405px;top:209px;width:118px;height:25px;background:#3bc8f5;border-radius:2px;"></div>
<div class="t" style="left:415.0px;top:218.0px;font-size:8.6px;font-weight:700;letter-spacing:0.43px;color:#fff;">ZAHLUNG ERHALTEN</div>
<div class="abs" style="left:77.5px;top:246.5px;width:445px;height:215.7px;background:#fff;border-radius:8px;border:1px solid #edf0f2"></div>
<div class="t" style="left:89.5px;top:260.0px;font-size:9.5px;letter-spacing:0.09px;color:#a8adb4;">Zahlung und Lieferung</div>
<div class="t" style="left:89.5px;top:284.0px;font-size:10.3px;letter-spacing:-0.01px;color:#2569b3;">Zahlung #915/1, 10.12.2025 (gesamt: 49 €)</div>
<div class="abs" style="left:89.5px;top:297px;width:61.5px;height:15px;background:#fff;border-radius:7.5px;border:1px solid #e3e5e8"></div>
<div class="t" style="left:96.0px;top:301.0px;font-size:7.2px;font-weight:700;letter-spacing:0.03px;color:#3f444b;">AKTIONEN</div>
<svg class="abs" style="left:139px;top:302.3px;" width="7" height="5.25" viewBox="0 0 8 6" fill="none" stroke="#8d939a" stroke-width="1"><path d="M.8 1.2l3.200 3.200 3.200-3.200"/></svg>
<div class="abs" style="left:153.75px;top:297px;width:71.75px;height:15px;background:#e4e6e8;border-radius:7.5px;"></div>
<div class="t" style="left:160.8px;top:301.0px;font-size:7.2px;font-weight:700;letter-spacing:0.02px;color:#4a4f56;">NICHT BEZAHLT</div>
<div class="t" style="left:89.5px;top:322.0px;font-size:10.3px;letter-spacing:0.03px;color:#2569b3;">Lieferung #915/2, 10.12.2025 (Zum Abholen, gesamt: 0 €)</div>
<div class="abs" style="left:89.5px;top:335.5px;width:61.5px;height:15px;background:#fff;border-radius:7.5px;border:1px solid #e3e5e8"></div>
<div class="t" style="left:96.0px;top:340.0px;font-size:7.2px;font-weight:700;letter-spacing:0.03px;color:#3f444b;">AKTIONEN</div>
<svg class="abs" style="left:139px;top:340.8px;" width="7" height="5.25" viewBox="0 0 8 6" fill="none" stroke="#8d939a" stroke-width="1"><path d="M.8 1.2l3.200 3.200 3.200-3.200"/></svg>
<div class="abs" style="left:153.75px;top:335.5px;width:95.75px;height:15px;background:#e4e6e8;border-radius:7.5px;"></div>
<div class="t" style="left:160.8px;top:340.0px;font-size:7.2px;font-weight:700;letter-spacing:-0.14px;color:#4a4f56;">LIEFERUNG ERWARTET</div>
<div class="t" style="left:89.5px;top:361.0px;font-size:10.3px;letter-spacing:0.02px;color:#2569b3;">Verkauf #915/2, 10.12.2025 (gesamt: 49 €)</div>
<div class="abs" style="left:89.5px;top:374px;width:61.5px;height:15px;background:#fff;border-radius:7.5px;border:1px solid #e3e5e8"></div>
<div class="t" style="left:96.0px;top:378.0px;font-size:7.2px;font-weight:700;letter-spacing:0.03px;color:#3f444b;">AKTIONEN</div>
<svg class="abs" style="left:139px;top:379.3px;" width="7" height="5.25" viewBox="0 0 8 6" fill="none" stroke="#8d939a" stroke-width="1"><path d="M.8 1.2l3.200 3.200 3.200-3.200"/></svg>
<div class="abs" style="left:153.75px;top:374px;width:49.75px;height:15px;background:#e4e6e8;border-radius:7.5px;"></div>
<div class="t" style="left:160.8px;top:378.0px;font-size:7.2px;font-weight:700;letter-spacing:0.01px;color:#4a4f56;">ENTWURF</div>
<div class="t" style="left:89.5px;top:402.0px;font-size:10.3px;letter-spacing:-0.30px;color:#2569b3;">Neu</div>
<div class="abs" style="left:89.5px;top:411px;width:18px;height:1px;background:none;border-radius:0px;border-bottom:1px dashed #2067b0;height:1px"></div>
<div class="abs" style="left:89.5px;top:420.5px;width:421px;height:1px;background:#eef1f3;border-radius:0px;"></div>
<div class="t" style="left:89.5px;top:435.0px;font-size:11.2px;letter-spacing:0.04px;color:#1f2226;-webkit-text-stroke:.12px #1f2226;">Auftragsbetrag</div>
<svg class="abs" style="left:165.5px;top:436px;" width="9" height="9" viewBox="0 0 9 9" fill="none"><circle cx="4.500" cy="4.500" r="4.300" fill="#cfd3d8"/><text x="4.500" y="7" font-size="6.500" font-weight="700" text-anchor="middle" fill="#fff" font-family="Liberation Sans,sans-serif">?</text></svg>
<div class="t" style="left:485.0px;top:434.0px;font-size:12.5px;letter-spacing:0.55px;color:#525860;">49</div>
<div class="t" style="left:503.5px;top:435.0px;font-size:11.5px;letter-spacing:0.59px;color:#a8adb4;">€</div>
<div class="t" style="left:77.0px;top:476.0px;font-size:9.3px;letter-spacing:-0.07px;color:#a8adb4;">Phase</div>
<div class="t" style="left:77.0px;top:490.0px;font-size:11.5px;letter-spacing:-0.04px;color:#333c47;">Neu</div>
<div class="t" style="left:77.0px;top:515.0px;font-size:9.3px;letter-spacing:0.23px;color:#a8adb4;">Abschlussdatum</div>
<div class="t" style="left:77.0px;top:529.0px;font-size:11.5px;letter-spacing:-0.03px;color:#333c47;">17. Dezember 2025</div>
<div class="t" style="left:77.0px;top:554.0px;font-size:9.3px;letter-spacing:0.13px;color:#a8adb4;">Formularname</div>
<div class="t" style="left:77.0px;top:568.0px;font-size:11.5px;letter-spacing:0.04px;color:#a0a5ab;">Feld ist leer</div>
<div class="t" style="left:77.0px;top:593.0px;font-size:9.3px;letter-spacing:0.19px;color:#a8adb4;">Trackingnummer</div>
<div class="t" style="left:77.0px;top:607.0px;font-size:11.5px;letter-spacing:0.04px;color:#a0a5ab;">Feld ist leer</div>
<div class="t" style="left:77.0px;top:631.0px;font-size:9.3px;letter-spacing:0.26px;color:#a8adb4;">Verantwortlich</div>
<div class="abs" style="left:77px;top:644px;width:433px;height:56px;background:#fff;border-radius:7px;border:1px solid #e9edef"></div>
<svg class="abs" style="left:85.5px;top:654.5px;" width="23" height="23" viewBox="0 0 23 23" fill="none"><defs><clipPath id="avp2"><circle cx="11.500" cy="11.500" r="11.500"/></clipPath></defs><g clip-path="url(#avp2)" opacity="1"><rect width="23" height="23" fill="#c9cecb"/><path d="M2.500 24c.5-2.500 2.500-3.600 5.500-4h7c3 .4 5 1.500 5.500 4z" fill="#3b4356"/><rect x="8.600" y="17" width="5.800" height="5" fill="#d79f88"/><ellipse cx="11.500" cy="7.300" rx="7.300" ry="6" fill="#56372a"/><ellipse cx="4.800" cy="12.800" rx="1.100" ry="1.800" fill="#dba18a"/><ellipse cx="18.200" cy="12.800" rx="1.100" ry="1.800" fill="#dba18a"/><path d="M5.300 9.500c0-3 2.500-4.600 6.200-4.600s6.200 1.600 6.200 4.600v4.500c0 4-2.800 7-6.200 7s-6.200-3-6.200-7z" fill="#e3ad95"/><path d="M5 10.500c-.3-3.500 1.500-6.300 6.500-6.300s6.800 2.800 6.500 6.300c-.8-2-1.500-3.300-2.600-3.800-2.400.7-5.400.7-7.800 0-1.100.5-1.800 1.800-2.600 3.800z" fill="#56372a"/><ellipse cx="8.700" cy="12" rx="1.100" ry=".6" fill="#6c7480"/><ellipse cx="14.300" cy="12" rx="1.100" ry=".6" fill="#6c7480"/><path d="M8.600 16.600c1.800 1.300 4 1.300 5.800 0-.5 1.700-1.700 2.400-2.900 2.400s-2.400-.7-2.900-2.400z" fill="#f4ece6"/><ellipse cx="7.300" cy="15" rx="1.600" ry="1.200" fill="#e79f8d" opacity=".6"/><ellipse cx="15.700" cy="15" rx="1.600" ry="1.200" fill="#e79f8d" opacity=".6"/></g></svg>
<div class="t" style="left:116.0px;top:662.0px;font-size:11.8px;letter-spacing:-0.01px;color:#2067b0;">Peter Schmidt</div>
<div class="abs" style="left:561px;top:164px;width:1px;height:355px;background:#e1e5e9;border-radius:0px;"></div>
<div class="abs" style="left:573px;top:164px;width:10px;height:1px;background:#e1e5e9;border-radius:0px;"></div>
<div class="abs" style="left:573px;top:281px;width:10px;height:1px;background:#e1e5e9;border-radius:0px;"></div>
<div class="abs" style="left:573px;top:353px;width:10px;height:1px;background:#e1e5e9;border-radius:0px;"></div>
<div class="abs" style="left:573px;top:436px;width:10px;height:1px;background:#e1e5e9;border-radius:0px;"></div>
<div class="abs" style="left:573px;top:519px;width:10px;height:1px;background:#e1e5e9;border-radius:0px;"></div>
<div class="abs" style="left:582.5px;top:147px;width:610px;height:106px;background:#fff;border-radius:9px;"></div>
<div class="abs" style="left:548.9px;top:151.7px;width:24.4px;height:24.4px;border-radius:50%;background:#56b1ff;"></div>
<svg class="abs" style="left:555px;top:159px;" width="12" height="11" viewBox="0 0 12 11" fill="none"><path d="M1 1h10v6.800H9l-1 2.200-1.800-2.200H1z" fill="#fff"/></svg>
<div class="abs" style="left:598px;top:157px;width:59px;height:24.5px;background:#e9f5fe;border-radius:6px;border:1px solid #cbe7fb"></div>
<div class="t" style="left:606.0px;top:165.0px;font-size:11.8px;letter-spacing:0.19px;color:#1d7ae6;">Aktivität</div>
<div class="t" style="left:667.5px;top:165.0px;font-size:11.8px;letter-spacing:-0.11px;color:#858c94;">Kommentar</div>
<div class="t" style="left:746.0px;top:165.0px;font-size:11.8px;letter-spacing:0.13px;color:#858c94;">Nachricht</div>
<div class="t" style="left:815.0px;top:155.0px;font-size:6px;letter-spacing:0.44px;color:#5a6068;">NEU</div>
<div class="t" style="left:815.0px;top:165.0px;font-size:11.8px;letter-spacing:-0.01px;color:#858c94;">Buchung</div>
<div class="t" style="left:880.0px;top:165.0px;font-size:11.8px;letter-spacing:-0.06px;color:#858c94;">Aufgabe</div>
<div class="t" style="left:942.5px;top:165.0px;font-size:11.8px;letter-spacing:0.07px;color:#858c94;">Zeitfenster</div>
<div class="t" style="left:1018.0px;top:165.0px;font-size:11.8px;letter-spacing:-0.13px;color:#858c94;">Zum Chat einladen</div>
<div class="t" style="left:1134.5px;top:165.0px;font-size:11.8px;letter-spacing:-0.22px;color:#858c94;">Mehr</div>
<svg class="abs" style="left:1164px;top:167.5px;" width="7.5" height="5.625" viewBox="0 0 8 6" fill="none" stroke="#9aa0a7" stroke-width="1"><path d="M.8 1.2l3.200 3.200 3.200-3.200"/></svg>
<div class="abs" style="left:598px;top:197.5px;width:578px;height:43px;background:#fff;border-radius:9px;border:1px solid #d5d8dc"></div>
<div class="t" style="left:612.0px;top:214.0px;font-size:11.5px;letter-spacing:0.09px;color:#a8adb4;">Zu erledigen</div>
<div class="t" style="left:1112.0px;top:214.0px;font-size:9.5px;letter-spacing:0.07px;color:#555b63;">aktionen</div>
<svg class="abs" style="left:1153px;top:216.5px;" width="7.5" height="5.625" viewBox="0 0 8 6" fill="none" stroke="#555b63" stroke-width="1"><path d="M.8 1.2l3.200 3.200 3.200-3.200"/></svg>
<div class="abs" style="left:582.5px;top:265px;width:610px;height:30.5px;background:#fff;border-radius:15.5px;"></div>
<div class="abs" style="left:548.9px;top:268.8px;width:24.4px;height:24.4px;border-radius:50%;background:#56b1ff;"></div>
<svg class="abs" style="left:554px;top:274.5px;" width="14" height="14" viewBox="0 0 14 14" fill="none"><path d="M3 1.800h8.300a1.200 1.200 0 0 1 1.200 1.200v5.200a1.200 1.200 0 0 1-1.200 1.200H6.500l-2.300 2.600V9.400H3a1.200 1.200 0 0 1-1.200-1.200V3A1.200 1.200 0 0 1 3 1.800z" fill="none" stroke="#fff" stroke-width="1.700" stroke-linejoin="round"/></svg>
<svg class="abs" style="left:591.5px;top:272px;" width="16.4" height="16.4" viewBox="0 0 23 23" fill="none"><defs><clipPath id="avp3"><circle cx="11.500" cy="11.500" r="11.500"/></clipPath></defs><g clip-path="url(#avp3)" opacity="1"><rect width="23" height="23" fill="#c9cecb"/><path d="M2.500 24c.5-2.500 2.500-3.600 5.500-4h7c3 .4 5 1.500 5.500 4z" fill="#3b4356"/><rect x="8.600" y="17" width="5.800" height="5" fill="#d79f88"/><ellipse cx="11.500" cy="7.300" rx="7.300" ry="6" fill="#56372a"/><ellipse cx="4.800" cy="12.800" rx="1.100" ry="1.800" fill="#dba18a"/><ellipse cx="18.200" cy="12.800" rx="1.100" ry="1.800" fill="#dba18a"/><path d="M5.300 9.500c0-3 2.500-4.600 6.200-4.600s6.200 1.600 6.200 4.600v4.500c0 4-2.800 7-6.200 7s-6.200-3-6.200-7z" fill="#e3ad95"/><path d="M5 10.500c-.3-3.500 1.500-6.300 6.500-6.300s6.800 2.800 6.500 6.300c-.8-2-1.500-3.300-2.600-3.800-2.400.7-5.400.7-7.800 0-1.100.5-1.800 1.800-2.600 3.800z" fill="#56372a"/><ellipse cx="8.700" cy="12" rx="1.100" ry=".6" fill="#6c7480"/><ellipse cx="14.300" cy="12" rx="1.100" ry=".6" fill="#6c7480"/><path d="M8.600 16.600c1.800 1.300 4 1.300 5.800 0-.5 1.700-1.700 2.400-2.900 2.400s-2.400-.7-2.900-2.400z" fill="#f4ece6"/><ellipse cx="7.300" cy="15" rx="1.600" ry="1.200" fill="#e79f8d" opacity=".6"/><ellipse cx="15.700" cy="15" rx="1.600" ry="1.200" fill="#e79f8d" opacity=".6"/></g></svg>
<div class="abs" style="left:601.5px;top:270.9px;width:18.6px;height:18.6px;border-radius:50%;background:#e6f4fe;border:1px solid #fff;"></div>
<svg class="abs" style="left:606.8px;top:276.2px;" width="8" height="8" viewBox="0 0 8 8" fill="none"><path d="M4 .5v7M.5 4h7" stroke="#4fc3f7" stroke-width="1.300"/></svg>
<div class="t" style="left:624.5px;top:275.0px;font-size:10.5px;letter-spacing:-0.09px;color:#c0c4c9;">Im Chat besprechen</div>
<div class="abs" style="left:561px;top:315px;width:631.5px;height:1px;background:#e1e5e9;border-radius:0px;"></div>
<div class="abs" style="left:847px;top:308px;width:81px;height:16.5px;background:#20c974;border-radius:8.5px;"></div>
<div class="t" style="left:858.5px;top:313.0px;font-size:9.2px;font-weight:700;letter-spacing:0.24px;color:#fff;">Zu erledigen</div>
<div class="abs" style="left:582.3px;top:336px;width:610.2px;height:43.5px;background:#fef7dd;border-radius:8px;"></div>
<div class="abs" style="left:548.9px;top:340.4px;width:24.4px;height:24.4px;border-radius:50%;background:#1fce7b;"></div>
<svg class="abs" style="left:557px;top:345.5px;" width="8" height="14" viewBox="0 0 8 14" fill="none"><circle cx="4" cy="2.100" r="1.800" fill="#fff"/><path d="M1.300 5.700h4.200v5.800l1.500.4v1.300H1.100v-1.300l1.600-.4V7.300l-1.400-.3z" fill="#fff"/></svg>
<div class="abs" style="left:594.6px;top:349.1px;width:16.8px;height:16.8px;border-radius:50%;background:#1fce7b;"></div>
<svg class="abs" style="left:598px;top:352.5px;" width="10" height="10" viewBox="0 0 10 10" fill="none"><path d="M5 0v10M0 5h10" stroke="#fff" stroke-width="1.500"/></svg>
<div class="t" style="left:620.5px;top:346.0px;font-size:11.5px;letter-spacing:0.08px;color:#1f2226;">Fügen Sie eine neue Aktivität hinzu</div>
<div class="t" style="left:620.5px;top:360.0px;font-size:9.6px;letter-spacing:0.35px;color:#b5b9be;">Planen Sie Ihre nächste Aktion im Auftrag, um nicht über den Kunden zu vergessen</div>
<div class="abs" style="left:561px;top:399px;width:631.5px;height:1px;background:#e1e5e9;border-radius:0px;"></div>
<div class="abs" style="left:862px;top:391px;width:50.5px;height:17px;background:#4fa9f7;border-radius:8.5px;"></div>
<div class="t" style="left:873.5px;top:396.0px;font-size:9.2px;font-weight:700;letter-spacing:0.29px;color:#fff;">Heute</div>
<div class="abs" style="left:1134px;top:391px;width:58px;height:17px;background:#fff;border-radius:8.5px;"></div>
<svg class="abs" style="left:1142px;top:395.5px;" width="8" height="8" viewBox="0 0 8 8" fill="none"><path d="M.5.800h7L4.800 4v3.200L3.200 6.200V4z" fill="#8d939a"/></svg>
<div class="t" style="left:1154.5px;top:397.0px;font-size:6.8px;font-weight:700;letter-spacing:0.54px;color:#a0a5ab;">FILTER</div>
<div class="abs" style="left:582.5px;top:419px;width:610px;height:70px;background:#fff;border-radius:8px;"></div>
<div class="abs" style="left:548.8px;top:423.6px;width:24.6px;height:24.6px;border-radius:50%;background:#fff;"></div>
<svg class="abs" style="left:554px;top:431px;" width="14" height="10" viewBox="0 0 14 10" fill="none"><rect x=".6" y=".6" width="12.800" height="8.800" rx="1.600" fill="none" stroke="#bcc1c7" stroke-width="1.200"/><rect x=".6" y="2.800" width="12.800" height="1.800" fill="#bcc1c7"/><rect x="2.400" y="6.200" width="2.600" height="1.300" fill="#bcc1c7"/></svg>
<div class="t" style="left:595.0px;top:430.0px;font-size:10px;font-weight:700;letter-spacing:-0.04px;color:#a8adb4;">Kunde hat Zahlungsmethode ausgewählt</div>
<div class="t" style="left:796.0px;top:430.0px;font-size:9.6px;letter-spacing:0.10px;color:#c9cdd2;">05:32</div>
<div class="t" style="left:595.0px;top:449.0px;font-size:10.8px;letter-spacing:-0.29px;color:#8b9097;">Zahlung</div>
<div class="t" style="left:635.0px;top:449.0px;font-size:10.8px;letter-spacing:0.02px;color:#2067b0;">#915/1, 10. Dezember 2025</div>
<div class="t" style="left:773.0px;top:449.0px;font-size:10.8px;letter-spacing:0.30px;color:#1f2226;">für 49 €</div>
<div class="t" style="left:595.0px;top:469.0px;font-size:10.2px;letter-spacing:0.07px;color:#8f959c;">Zahlungsmethode: Bargeld</div>
<svg class="abs" style="left:1166.3px;top:426.5px;" width="15.6" height="15.6" viewBox="0 0 23 23" fill="none"><defs><clipPath id="avp4"><circle cx="11.500" cy="11.500" r="11.500"/></clipPath></defs><g clip-path="url(#avp4)" opacity="0.55"><rect width="23" height="23" fill="#c9cecb"/><path d="M2.500 24c.5-2.500 2.500-3.600 5.500-4h7c3 .4 5 1.500 5.500 4z" fill="#3b4356"/><rect x="8.600" y="17" width="5.800" height="5" fill="#d79f88"/><ellipse cx="11.500" cy="7.300" rx="7.300" ry="6" fill="#56372a"/><ellipse cx="4.800" cy="12.800" rx="1.100" ry="1.800" fill="#dba18a"/><ellipse cx="18.200" cy="12.800" rx="1.100" ry="1.800" fill="#dba18a"/><path d="M5.300 9.500c0-3 2.500-4.600 6.200-4.600s6.200 1.600 6.200 4.600v4.500c0 4-2.800 7-6.200 7s-6.200-3-6.200-7z" fill="#e3ad95"/><path d="M5 10.500c-.3-3.500 1.500-6.300 6.500-6.300s6.800 2.800 6.500 6.300c-.8-2-1.500-3.300-2.600-3.800-2.400.7-5.400.7-7.800 0-1.100.5-1.800 1.800-2.600 3.800z" fill="#56372a"/><ellipse cx="8.700" cy="12" rx="1.100" ry=".6" fill="#6c7480"/><ellipse cx="14.300" cy="12" rx="1.100" ry=".6" fill="#6c7480"/><path d="M8.600 16.600c1.800 1.300 4 1.300 5.800 0-.5 1.700-1.700 2.400-2.900 2.400s-2.400-.7-2.900-2.400z" fill="#f4ece6"/><ellipse cx="7.300" cy="15" rx="1.600" ry="1.200" fill="#e79f8d" opacity=".6"/><ellipse cx="15.700" cy="15" rx="1.600" ry="1.200" fill="#e79f8d" opacity=".6"/></g></svg>
<div class="abs" style="left:582.5px;top:502px;width:610px;height:53.5px;background:#fff;border-radius:8px;"></div>
<div class="abs" style="left:548.9px;top:506.7px;width:24.4px;height:24.4px;border-radius:50%;background:#fff;"></div>
<svg class="abs" style="left:557.5px;top:512.5px;" width="7" height="13" viewBox="0 0 7 13" fill="none"><circle cx="3.500" cy="1.900" r="1.500" fill="#bcc1c7"/><path d="M1 4.800h3.800v5.600h1.400v1.600H.8v-1.600h1.600V6.400H1z" fill="#bcc1c7"/></svg>
<div class="t" style="left:595.0px;top:513.0px;font-size:10px;font-weight:700;letter-spacing:-0.09px;color:#a8adb4;">Auftrag erstellt. Bestellung des Onlineshops</div>
<div class="t" style="left:810.5px;top:513.0px;font-size:9.6px;letter-spacing:-0.10px;color:#c9cdd2;">05:32</div>
<div class="t" style="left:595.0px;top:532.0px;font-size:10.8px;letter-spacing:-0.24px;color:#8b9097;">Bestellung</div>
<div class="t" style="left:646.2px;top:532.0px;font-size:10.8px;letter-spacing:0.05px;color:#2067b0;">#915, 10. Dezember 2025</div>
<div class="t" style="left:775.8px;top:532.0px;font-size:10.8px;letter-spacing:0.33px;color:#1f2226;">für 49 €</div>
<svg class="abs" style="left:1166.3px;top:509.5px;" width="15.6" height="15.6" viewBox="0 0 23 23" fill="none"><defs><clipPath id="avp5"><circle cx="11.500" cy="11.500" r="11.500"/></clipPath></defs><g clip-path="url(#avp5)" opacity="0.55"><rect width="23" height="23" fill="#c9cecb"/><path d="M2.500 24c.5-2.500 2.500-3.600 5.500-4h7c3 .4 5 1.500 5.500 4z" fill="#3b4356"/><rect x="8.600" y="17" width="5.800" height="5" fill="#d79f88"/><ellipse cx="11.500" cy="7.300" rx="7.300" ry="6" fill="#56372a"/><ellipse cx="4.800" cy="12.800" rx="1.100" ry="1.800" fill="#dba18a"/><ellipse cx="18.200" cy="12.800" rx="1.100" ry="1.800" fill="#dba18a"/><path d="M5.300 9.500c0-3 2.500-4.600 6.200-4.600s6.200 1.600 6.200 4.600v4.500c0 4-2.800 7-6.200 7s-6.200-3-6.200-7z" fill="#e3ad95"/><path d="M5 10.500c-.3-3.500 1.500-6.300 6.500-6.300s6.800 2.800 6.500 6.300c-.8-2-1.500-3.300-2.600-3.800-2.400.7-5.400.7-7.800 0-1.100.5-1.800 1.800-2.600 3.800z" fill="#56372a"/><ellipse cx="8.700" cy="12" rx="1.100" ry=".6" fill="#6c7480"/><ellipse cx="14.300" cy="12" rx="1.100" ry=".6" fill="#6c7480"/><path d="M8.600 16.600c1.800 1.300 4 1.300 5.800 0-.5 1.700-1.700 2.400-2.900 2.400s-2.400-.7-2.900-2.400z" fill="#f4ece6"/><ellipse cx="7.300" cy="15" rx="1.600" ry="1.200" fill="#e79f8d" opacity=".6"/><ellipse cx="15.700" cy="15" rx="1.600" ry="1.200" fill="#e79f8d" opacity=".6"/></g></svg>
<div class="abs" style="left:573px;top:488.800px;width:631.500px;height:80.700px;border:2.900px solid #fc5648;border-radius:10px;filter:drop-shadow(0 1.800px .9px rgba(20,20,20,.65))"></div>
<div class="abs" style="left:1191px;top:478px;width:24px;height:24px;border-radius:50%;background:#f8564a;"></div>
<div class="t" style="left:1199.0px;top:484.0px;font-size:13.5px;font-weight:700;letter-spacing:0.00px;color:#fff;">1</div>
<div class="abs" style="left:240px;top:684px;width:860px;height:10px;border-radius:50%;box-shadow:0 0 24px 10px rgba(70,80,90,.32)"></div>
</div>
</div>
<div id="scroll" class="abs"></div>
<div id="edgeL" class="abs"></div>
</div>
</body>
</html>
